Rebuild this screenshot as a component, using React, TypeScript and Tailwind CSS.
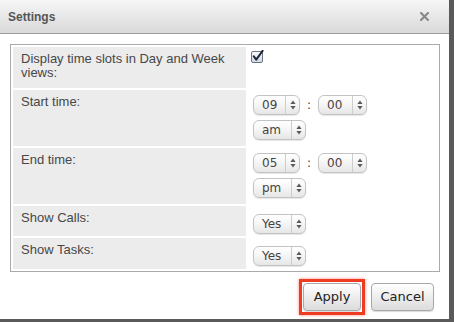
import React from "react";

function Arrows() {
  return (
    <svg width="6" height="10" viewBox="0 0 6 10">
      <path d="M3 0.5 L5.6 4 L0.4 4 Z" fill="#5a5a5a" />
      <path d="M3 9.5 L5.6 6 L0.4 6 Z" fill="#5a5a5a" />
    </svg>
  );
}

function Sel({ value, w }: { value: string; w: string }) {
  return (
    <div
      className={`${w} inline-flex h-[20px] items-stretch rounded-[6px] border border-[#c3c3c3] bg-gradient-to-b from-[#ffffff] via-[#f5f5f5] to-[#e6e6e6] shadow-[0_1px_1px_rgba(0,0,0,0.1)] text-[12px] text-[#444] font-['DejaVu_Sans',sans-serif]`}
    >
      <div className="flex flex-1 items-center pl-[8px] leading-none">{value}</div>
      <div className="flex w-[14px] items-center justify-center border-l border-[#cdcdcd]">
        <Arrows />
      </div>
    </div>
  );
}

function Checkbox() {
  return (
    <svg width="13" height="13" viewBox="0 0 13 13">
      <defs>
        <linearGradient id="cb" x1="0" y1="0" x2="0" y2="1">
          <stop offset="0" stopColor="#fbfcfe" />
          <stop offset="1" stopColor="#cfd6e2" />
        </linearGradient>
      </defs>
      <rect x="0.5" y="1.5" width="11" height="11" rx="1.5" fill="url(#cb)" stroke="#6f7580" />
      <path d="M2.8 6.4 L5.2 9.6 L11.6 0.8" fill="none" stroke="#1d2738" strokeWidth="2" strokeLinecap="round" strokeLinejoin="round" />
    </svg>
  );
}

export default function App() {
  const label = "bg-[#ececec] align-top pl-[8px] pt-[5px] text-[13px] leading-[14px] text-[#474747]";
  const val = "bg-white align-top pl-[5px] pt-[5px]";
  return (
    <div className="flex h-[322px] w-[454px] flex-col bg-[#5a5a5a] font-['Liberation_Sans',Arial,sans-serif]">
      <div className="flex h-[319px] w-[449px] flex-col bg-white">
        <div className="flex h-[34px] shrink-0 items-center justify-between border-b border-[#9c9c9c] bg-gradient-to-b from-[#f6f6f6] to-[#d9d9d9] pl-[8px] pr-[20px]">
          <span className="text-[12px] font-bold text-[#555]">Settings</span>
          <svg width="9" height="9" viewBox="0 0 9 9">
            <path d="M1 1 L8 8 M8 1 L1 8" stroke="#8a8a8a" strokeWidth="2.2" strokeLinecap="square" />
          </svg>
        </div>
        <div className="px-[10px] pt-[10px]">
          <table className="w-[430px] border-separate border-spacing-[2px] border border-[#aaaaaa]">
            <tbody>
              <tr className="h-[41px]">
                <td className={`${label} w-[233px]`}>
                  Display time slots in Day and Week
                  <br />
                  views:
                </td>
                <td className="bg-white align-top pl-[3px] pt-[3px]">
                  <Checkbox />
                </td>
              </tr>
              <tr className="h-[56px]">
                <td className={label}>Start time:</td>
                <td className={val}>
                  <div className="flex flex-col gap-[5px]">
                    <div className="flex items-center">
                      <Sel value="09" w="w-[47px]" />
                      <span className="w-[18px] text-center text-[12px] text-[#444] font-['DejaVu_Sans',sans-serif]">:</span>
                      <Sel value="00" w="w-[49px]" />
                    </div>
                    <div className="flex">
                      <Sel value="am" w="w-[53px]" />
                    </div>
                  </div>
                </td>
              </tr>
              <tr className="h-[56px]">
                <td className={label}>End time:</td>
                <td className={val}>
                  <div className="flex flex-col gap-[5px]">
                    <div className="flex items-center">
                      <Sel value="05" w="w-[47px]" />
                      <span className="w-[18px] text-center text-[12px] text-[#444] font-['DejaVu_Sans',sans-serif]">:</span>
                      <Sel value="00" w="w-[49px]" />
                    </div>
                    <div className="flex">
                      <Sel value="pm" w="w-[53px]" />
                    </div>
                  </div>
                </td>
              </tr>
              <tr className="h-[30px]">
                <td className={label}>Show Calls:</td>
                <td className={val}>
                  <Sel value="Yes" w="w-[53px]" />
                </td>
              </tr>
              <tr className="h-[31px]">
                <td className={label}>Show Tasks:</td>
                <td className={val}>
                  <Sel value="Yes" w="w-[53px]" />
                </td>
              </tr>
            </tbody>
          </table>
        </div>
        <div className="mt-[11px] flex justify-end gap-[10px] pr-[15px] font-['DejaVu_Sans',sans-serif] text-[13px] text-[#222]">
          <div className="relative">
            <span className="pointer-events-none absolute -inset-[4px] border-[3px] border-[#ef3b22] shadow-[0_0_3px_rgba(239,59,34,0.6)]" />
            <button className="h-[28px] w-[58px] rounded-[4px] border border-[#a9a9a9] bg-gradient-to-b from-[#ffffff] to-[#dcdcdc] shadow-[0_1px_1px_rgba(0,0,0,0.15)]">
              Apply
            </button>
          </div>
          <button className="h-[28px] w-[63px] rounded-[4px] border border-[#a9a9a9] bg-gradient-to-b from-[#ffffff] to-[#dcdcdc] shadow-[0_1px_1px_rgba(0,0,0,0.15)]">
            Cancel
          </button>
        </div>
      </div>
    </div>
  );
}
